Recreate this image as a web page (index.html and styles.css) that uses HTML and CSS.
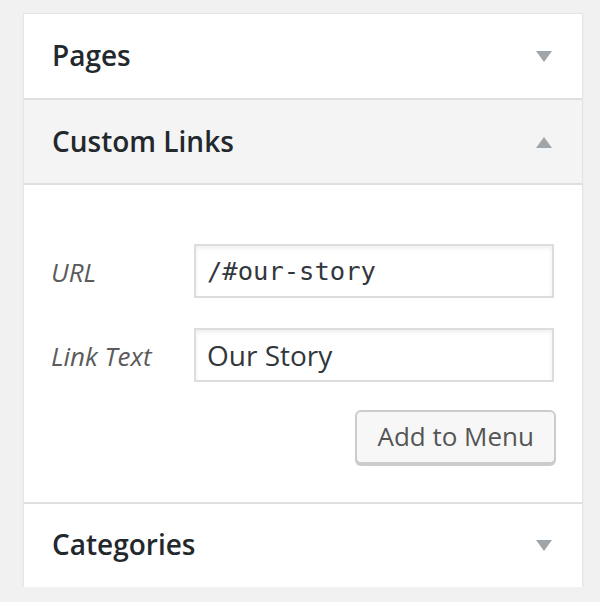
FILE: index.html
```html
<!DOCTYPE html>
<html>
<head>
<link rel="stylesheet" href="styles.css">
</head>
<body>
    <div class="accordion">
        <div class="section">
            <h3 class="section-title">
                <span>Pages</span>
                <svg class="arrow" width="16" height="11" viewBox="0 0 16 11"><polygon points="0,0 16,0 8,11" /></svg>
            </h3>
        </div>

        <div class="section open">
            <h3 class="section-title">
                <span>Custom Links</span>
                <svg class="arrow" width="16" height="11" viewBox="0 0 16 11"><polygon points="0,11 16,11 8,0" /></svg>
            </h3>
            <div class="section-content">
                <div class="link-form">
                    <label for="custom-url">URL</label>
                    <input type="text" id="custom-url" class="code" value="/#our-story" />
                    <label for="custom-text">Link Text</label>
                    <input type="text" id="custom-text" value="Our Story" />
                </div>
                <div class="controls">
                    <button>Add to Menu</button>
                </div>
            </div>
        </div>

        <div class="section last">
            <h3 class="section-title">
                <span>Categories</span>
                <svg class="arrow" width="16" height="11" viewBox="0 0 16 11"><polygon points="0,0 16,0 8,11" /></svg>
            </h3>
        </div>
    </div>
</body>
</html>
```

FILE: styles.css
```css
body {
    margin: 0;
    padding: 13px 17px 0 23px;
    background-color: #f1f1f1;
    font-family: "Open Sans", sans-serif;
    color: #32373c;
}

.accordion {
    background-color: #fff;
    border: 1px solid #e5e5e5;
    border-bottom: none;
    box-shadow: 0 2px 2px rgba(0, 0, 0, 0.06);
}

.section {
    border-bottom: 2px solid #dfdfdf;
}

.section.last {
    border-bottom: none;
}

.section-title {
    display: flex;
    align-items: center;
    justify-content: space-between;
    margin: 0;
    padding: 20px 30px 22px 28px;
    font-size: 28px;
    line-height: 42px;
    font-weight: 600;
    color: #23282d;
}

.section.open .section-title {
    background-color: #f4f4f4;
    padding-bottom: 21px;
    border-bottom: 2px solid #dfdfdf;
}

.section.last .section-title {
    padding-top: 19px;
}

.arrow {
    display: block;
    fill: #a0a5aa;
    margin-top: 2px;
}

.section-content {
    padding: 59px 26px 38px 27px;
}

.link-form {
    display: grid;
    grid-template-columns: 143px 1fr;
    row-gap: 30px;
    align-items: center;
    margin-right: 2px;
}

.link-form label {
    font-size: 26px;
    font-style: italic;
    color: #5b5b5b;
    padding-top: 2px;
}

.link-form input {
    box-sizing: border-box;
    width: 100%;
    height: 54px;
    margin: 0;
    padding: 0 11px;
    border: 2px solid #dddddd;
    box-shadow: inset 0 2px 4px rgba(0, 0, 0, 0.07);
    background-color: #fff;
    font-family: "Open Sans", sans-serif;
    font-size: 28px;
    color: #32373c;
    outline: none;
}

.link-form input.code {
    font-family: "DejaVu Sans Mono", monospace;
    font-size: 25.5px;
}

.controls {
    display: flex;
    justify-content: flex-end;
    margin-top: 28px;
}

button {
    box-sizing: border-box;
    height: 54px;
    padding: 0 20px 2px;
    border: 2px solid #cccccc;
    border-radius: 6px;
    background-color: #f7f7f7;
    box-shadow: 0 2px 0 #cccccc;
    font-family: "Open Sans", sans-serif;
    font-size: 26px;
    color: #555;
    cursor: pointer;
}
```
